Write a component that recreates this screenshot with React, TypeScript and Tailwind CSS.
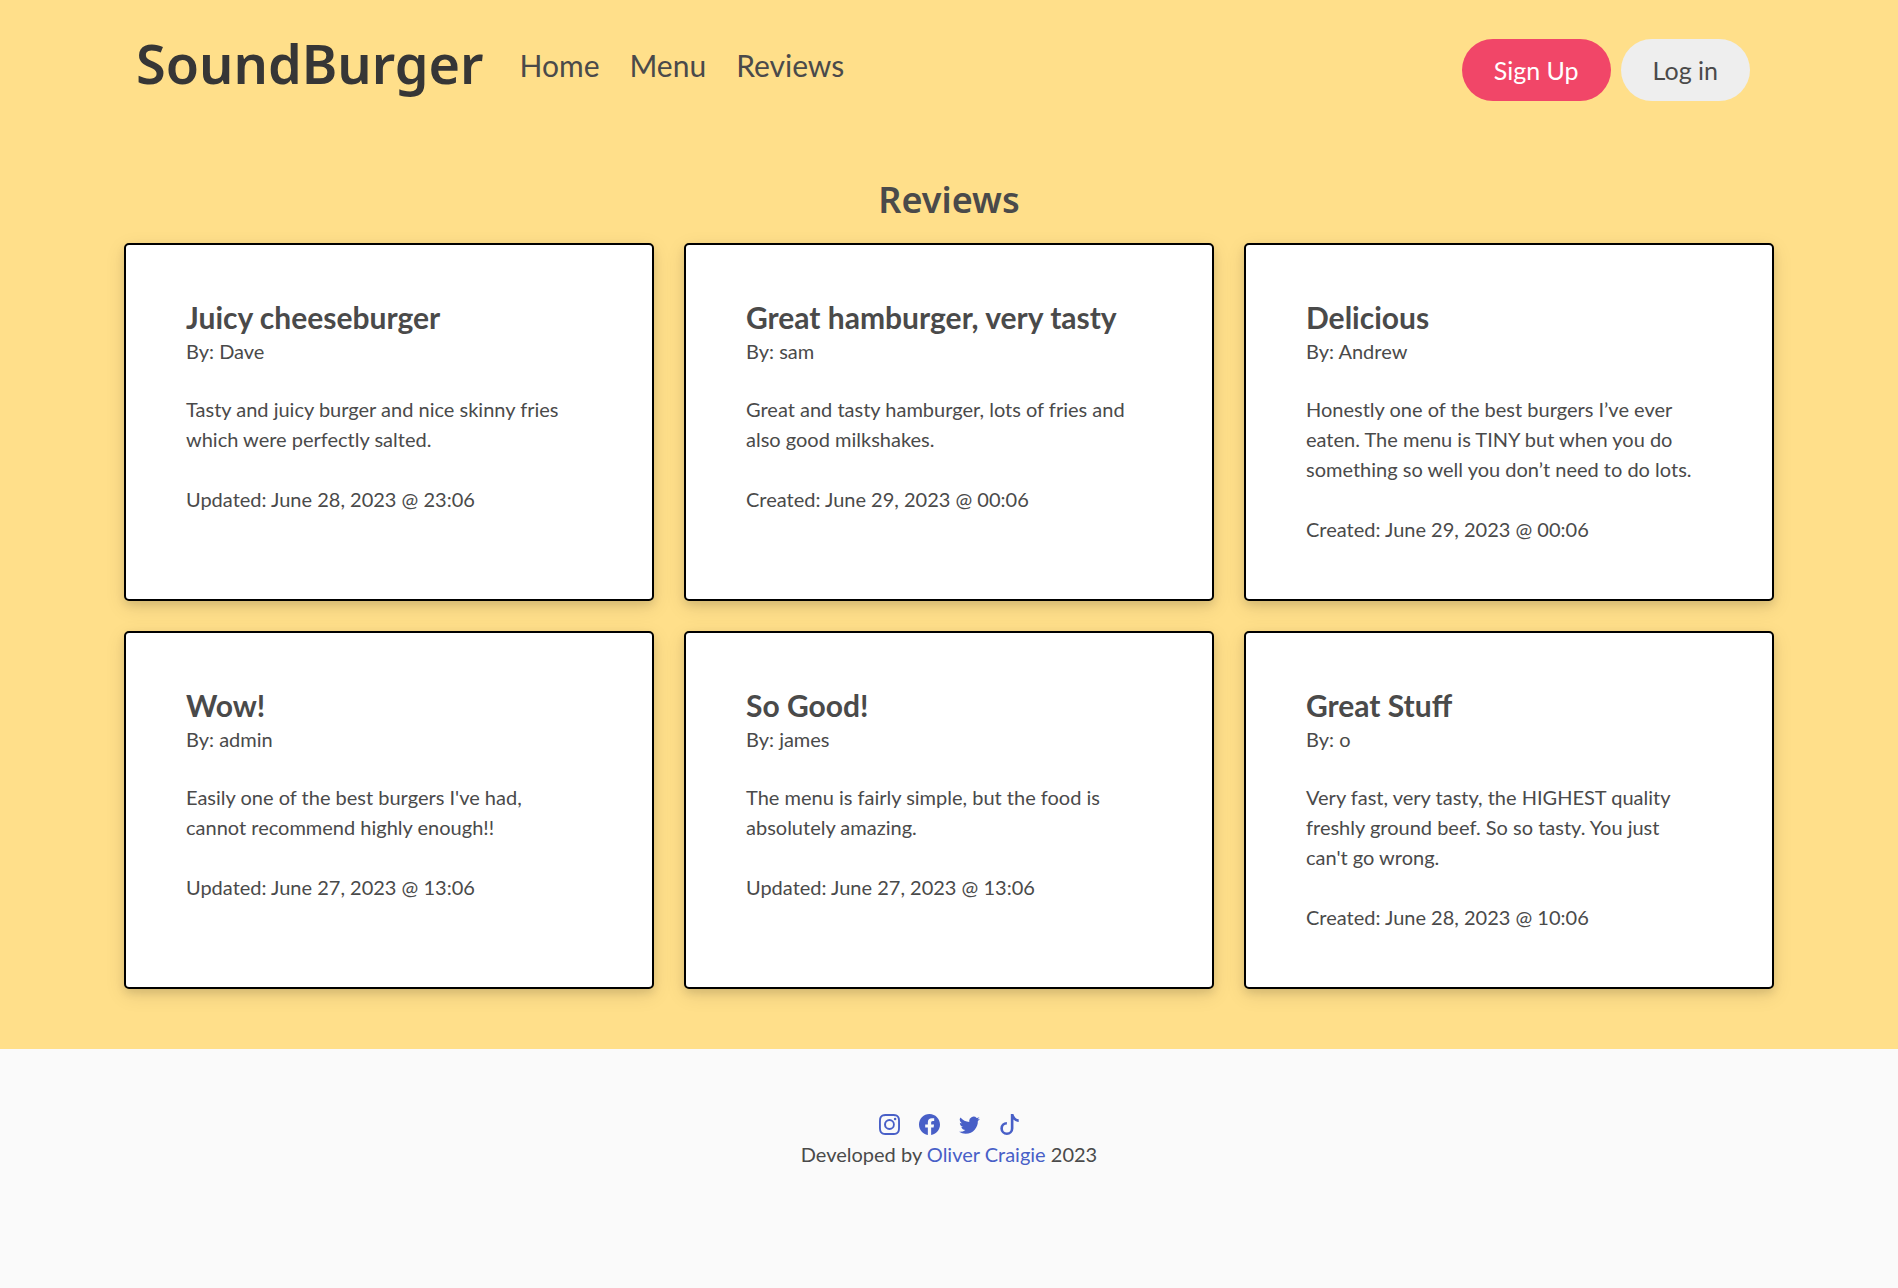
import { BsInstagram, BsFacebook, BsTwitter, BsTiktok } from "react-icons/bs";

type Review = { title: string; author: string; body: string; stamp: string };

const reviews: Review[] = [
  {
    title: "Juicy cheeseburger",
    author: "Dave",
    body: "Tasty and juicy burger and nice skinny fries which were perfectly salted.",
    stamp: "Updated: June 28, 2023 @ 23:06",
  },
  {
    title: "Great hamburger, very tasty",
    author: "sam",
    body: "Great and tasty hamburger, lots of fries and also good milkshakes.",
    stamp: "Created: June 29, 2023 @ 00:06",
  },
  {
    title: "Delicious",
    author: "Andrew",
    body: "Honestly one of the best burgers I’ve ever eaten. The menu is TINY but when you do something so well you don’t need to do lots.",
    stamp: "Created: June 29, 2023 @ 00:06",
  },
  {
    title: "Wow!",
    author: "admin",
    body: "Easily one of the best burgers I've had, cannot recommend highly enough!!",
    stamp: "Updated: June 27, 2023 @ 13:06",
  },
  {
    title: "So Good!",
    author: "james",
    body: "The menu is fairly simple, but the food is absolutely amazing.",
    stamp: "Updated: June 27, 2023 @ 13:06",
  },
  {
    title: "Great Stuff",
    author: "o",
    body: "Very fast, very tasty, the HIGHEST quality freshly ground beef. So so tasty. You just can't go wrong.",
    stamp: "Created: June 28, 2023 @ 10:06",
  },
];

const links = ["Home", "Menu", "Reviews"];

const socials = [
  { label: "Instagram", Icon: BsInstagram },
  { label: "Facebook", Icon: BsFacebook },
  { label: "Twitter", Icon: BsTwitter },
  { label: "TikTok", Icon: BsTiktok },
];

function ReviewCard({ title, author, body, stamp }: Review) {
  return (
    <article className="rounded-[5px] border-2 border-black bg-white pt-[53px] pr-[72px] pb-[55px] pl-[60px] shadow-[0_4px_8px_0_rgba(0,0,0,0.1),0_6px_20px_0_rgba(0,0,0,0.1)]">
      <h2 className="text-[30px] leading-[38px] font-bold">{title}</h2>
      <p>By: {author}</p>
      <p className="mt-7">{body}</p>
      <p className="mt-[30px]">{stamp}</p>
    </article>
  );
}

export default function App() {
  return (
    <div className="flex min-h-screen flex-col bg-[#fafafa] font-['Lato',sans-serif] text-[20px] leading-[30px] text-[#4a4a4a]">
      <div className="bg-[#ffdf8a] pb-[60px]">
        <header className="mx-auto flex max-w-[1650px] items-start px-3 pt-7">
          <a
            href="#home"
            className="font-['Noto_Sans',sans-serif] text-[54px] leading-[70px] font-semibold text-[#363636]"
          >
            SoundBurger
          </a>
          <nav className="mt-[15px] ml-9 flex grow gap-[30px] text-[30px] leading-[45px]">
            {links.map((link) => (
              <a key={link} href={"#" + link.toLowerCase()}>
                {link}
              </a>
            ))}
          </nav>
          <div className="mt-[11px] mr-3 flex gap-[10px] text-[25px] leading-[38px]">
            <button type="button" className="rounded-full bg-[#f14668] px-8 py-3 text-white">
              Sign Up
            </button>
            <button type="button" className="rounded-full bg-[#eeeeee] px-8 py-3">
              Log in
            </button>
          </div>
        </header>
        <main className="mx-auto max-w-[1650px] pt-[74px]">
          <h1 className="text-center font-['Noto_Sans',sans-serif] text-[36px] leading-[50px] font-semibold">
            Reviews
          </h1>
          <div className="mt-[18px] grid grid-cols-3 gap-[30px]">
            {reviews.map((review) => (
              <ReviewCard key={review.title} {...review} />
            ))}
          </div>
        </main>
      </div>
      <footer className="flex flex-col items-center pt-[60px]">
        <div className="flex h-[30px] items-center gap-[19px] text-[#485fc7]">
          {socials.map(({ label, Icon }) => (
            <a key={label} href={"#" + label.toLowerCase()} aria-label={label}>
              <Icon className="size-[21px]" />
            </a>
          ))}
        </div>
        <p>
          Developed by{" "}
          <a href="#author" className="text-[#485fc7]">
            Oliver Craigie
          </a>{" "}
          2023
        </p>
      </footer>
    </div>
  );
}
